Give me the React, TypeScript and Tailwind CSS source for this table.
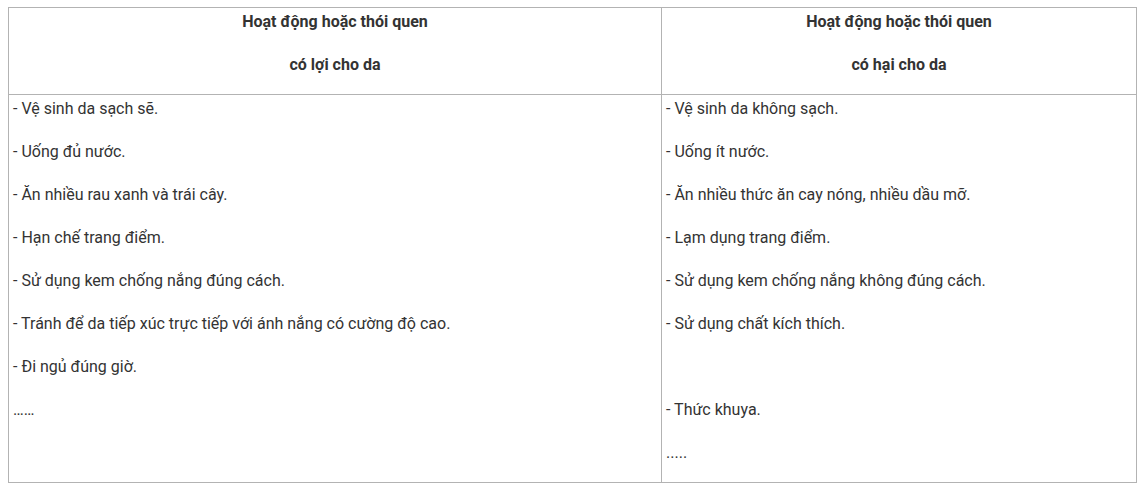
import React from "react";

const left = [
  "- Vệ sinh da sạch sẽ.",
  "- Uống đủ nước.",
  "- Ăn nhiều rau xanh và trái cây.",
  "- Hạn chế trang điểm.",
  "- Sử dụng kem chống nắng đúng cách.",
  "- Tránh để da tiếp xúc trực tiếp với ánh nắng có cường độ cao.",
  "- Đi ngủ đúng giờ.",
  "……",
];

const right = [
  "- Vệ sinh da không sạch.",
  "- Uống ít nước.",
  "- Ăn nhiều thức ăn cay nóng, nhiều dầu mỡ.",
  "- Lạm dụng trang điểm.",
  "- Sử dụng kem chống nắng không đúng cách.",
  "- Sử dụng chất kích thích.",
  "\u00a0",
  "- Thức khuya.",
  ".....",
];

function Lines({ items, bold, center }: { items: string[]; bold?: boolean; center?: boolean }) {
  return (
    <div className={"flex flex-col px-[4px] pt-[1px] " + (center ? "items-center text-center" : "")}>
      {items.map((t, i) => (
        <p key={i} className={"mb-[17px] last:mb-[16px] leading-[26px] text-[16px] " + (bold ? "font-bold" : "")}>
          {t}
        </p>
      ))}
    </div>
  );
}

export default function App() {
  return (
    <div className="bg-white min-h-[488px] pt-[7px] pl-[8px]" style={{ fontFamily: "Roboto, 'Noto Sans', sans-serif" }}>
      <div className="w-[1129px] border border-[#b3b3b3] text-[#333333]">
        <div className="grid grid-cols-[653px_1fr] border-b border-[#b3b3b3]">
          <div className="border-r border-[#b3b3b3]">
            <Lines items={["Hoạt động hoặc thói quen", "có lợi cho da"]} bold center />
          </div>
          <div>
            <Lines items={["Hoạt động hoặc thói quen", "có hại cho da"]} bold center />
          </div>
        </div>
        <div className="grid grid-cols-[653px_1fr]">
          <div className="border-r border-[#b3b3b3]">
            <Lines items={left} />
          </div>
          <div>
            <Lines items={right} />
          </div>
        </div>
      </div>
    </div>
  );
}
